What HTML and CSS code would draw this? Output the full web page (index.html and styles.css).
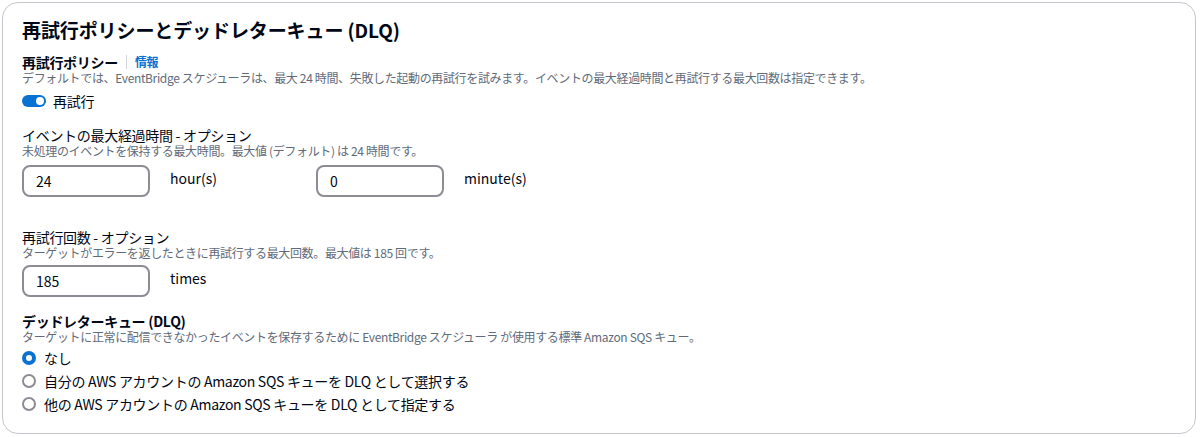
FILE: index.html
```html
<!DOCTYPE html>
<html lang="ja">
<head>
<meta charset="utf-8">
<link rel="stylesheet" href="styles.css">
</head>
<body>
<div class="panel">
  <h2 class="title">再試行ポリシーとデッドレターキュー (DLQ)</h2>

  <div class="field first">
    <div class="label bold">再試行ポリシー<span class="divider"></span><a class="info">情報</a></div>
    <div class="desc">デフォルトでは、EventBridge スケジューラは、最大 24 時間、失敗した起動の再試行を試みます。イベントの最大経過時間と再試行する最大回数は指定できます。</div>
    <div class="toggle-row"><span class="toggle"><span class="knob"></span></span><span>再試行</span></div>
  </div>

  <div class="field">
    <div class="label">イベントの最大経過時間 - オプション</div>
    <div class="desc">未処理のイベントを保持する最大時間。最大値 (デフォルト) は 24 時間です。</div>
    <div class="inputs">
      <div class="group"><div class="input">24</div><span class="unit">hour(s)</span></div>
      <div class="group"><div class="input">0</div><span class="unit">minute(s)</span></div>
    </div>
  </div>

  <div class="field gap-lg">
    <div class="label">再試行回数 - オプション</div>
    <div class="desc">ターゲットがエラーを返したときに再試行する最大回数。最大値は 185 回です。</div>
    <div class="inputs tight">
      <div class="group"><div class="input">185</div><span class="unit">times</span></div>
    </div>
  </div>

  <div class="field">
    <div class="label bold">デッドレターキュー (DLQ)</div>
    <div class="desc">ターゲットに正常に配信できなかったイベントを保存するために EventBridge スケジューラ が使用する標準 Amazon SQS キュー。</div>
    <div class="radios">
      <div class="radio-row"><span class="radio checked"></span><span>なし</span></div>
      <div class="radio-row"><span class="radio"></span><span>自分の AWS アカウントの Amazon SQS キューを DLQ として選択する</span></div>
      <div class="radio-row"><span class="radio"></span><span>他の AWS アカウントの Amazon SQS キューを DLQ として指定する</span></div>
    </div>
  </div>
</div>
</body>
</html>
```

FILE: styles.css
```css
* { box-sizing: border-box; }
html, body { margin: 0; padding: 0; background: #ffffff; }
body {
  font-family: "Noto Sans CJK JP", "Open Sans", sans-serif;
  color: #000716;
  padding: 2px 4px 3px 2px;
}
.panel {
  border: 1px solid #c6c6cd;
  border-radius: 16px;
  height: 432px;
  padding: 15px 19px 17px 19px;
}
.title {
  margin: 0;
  font-size: 19px;
  line-height: 24px;
  font-weight: 700;
  letter-spacing: -0.1px;
}
.field { margin-top: 16px; }
.field.first { margin-top: 12px; }
.field.gap-lg { margin-top: 32px; }
.label {
  font-size: 14px;
  line-height: 16px;
  letter-spacing: -0.3px;
  display: flex;
  align-items: center;
}
.label.bold { font-weight: 700; }
.divider {
  display: inline-block;
  width: 1px;
  height: 14px;
  background: #d1d5db;
  margin: 0 8px;
}
.info { color: #0972d3; font-weight: 700; font-size: 12px; }
.desc {
  font-size: 12px;
  line-height: 16px;
  letter-spacing: -0.35px;
  color: #5f6b7a;
}
.toggle-row {
  margin-top: 5px;
  height: 20px;
  display: flex;
  align-items: center;
  gap: 7px;
  font-size: 14px;
  letter-spacing: -0.3px;
}
.toggle {
  width: 24px;
  height: 12px;
  border-radius: 6px;
  background: #0972d3;
  display: flex;
  align-items: center;
  justify-content: flex-end;
  padding-right: 2px;
}
.knob {
  width: 8px;
  height: 8px;
  border-radius: 50%;
  background: #ffffff;
}
.inputs {
  margin-top: 6px;
  display: grid;
  grid-template-columns: 294px 294px;
}
.inputs.tight { margin-top: 4px; }
.group {
  display: flex;
  align-items: flex-start;
  gap: 20px;
}
.input {
  width: 128px;
  height: 32px;
  border: 2px solid #8c8c94;
  border-radius: 8px;
  padding: 0 12px;
  font-size: 14px;
  line-height: 28px;
}
.unit {
  font-size: 14px;
  line-height: 20px;
  padding-top: 3px;
}
.radios { margin-top: 1px; }
.radio-row {
  height: 23px;
  display: flex;
  align-items: center;
  gap: 8px;
  font-size: 14px;
  letter-spacing: -0.3px;
}
.radio {
  width: 14px;
  height: 14px;
  border-radius: 50%;
  border: 2px solid #8c8c94;
  background: #ffffff;
}
.radio.checked { border: 4px solid #0972d3; }
```
